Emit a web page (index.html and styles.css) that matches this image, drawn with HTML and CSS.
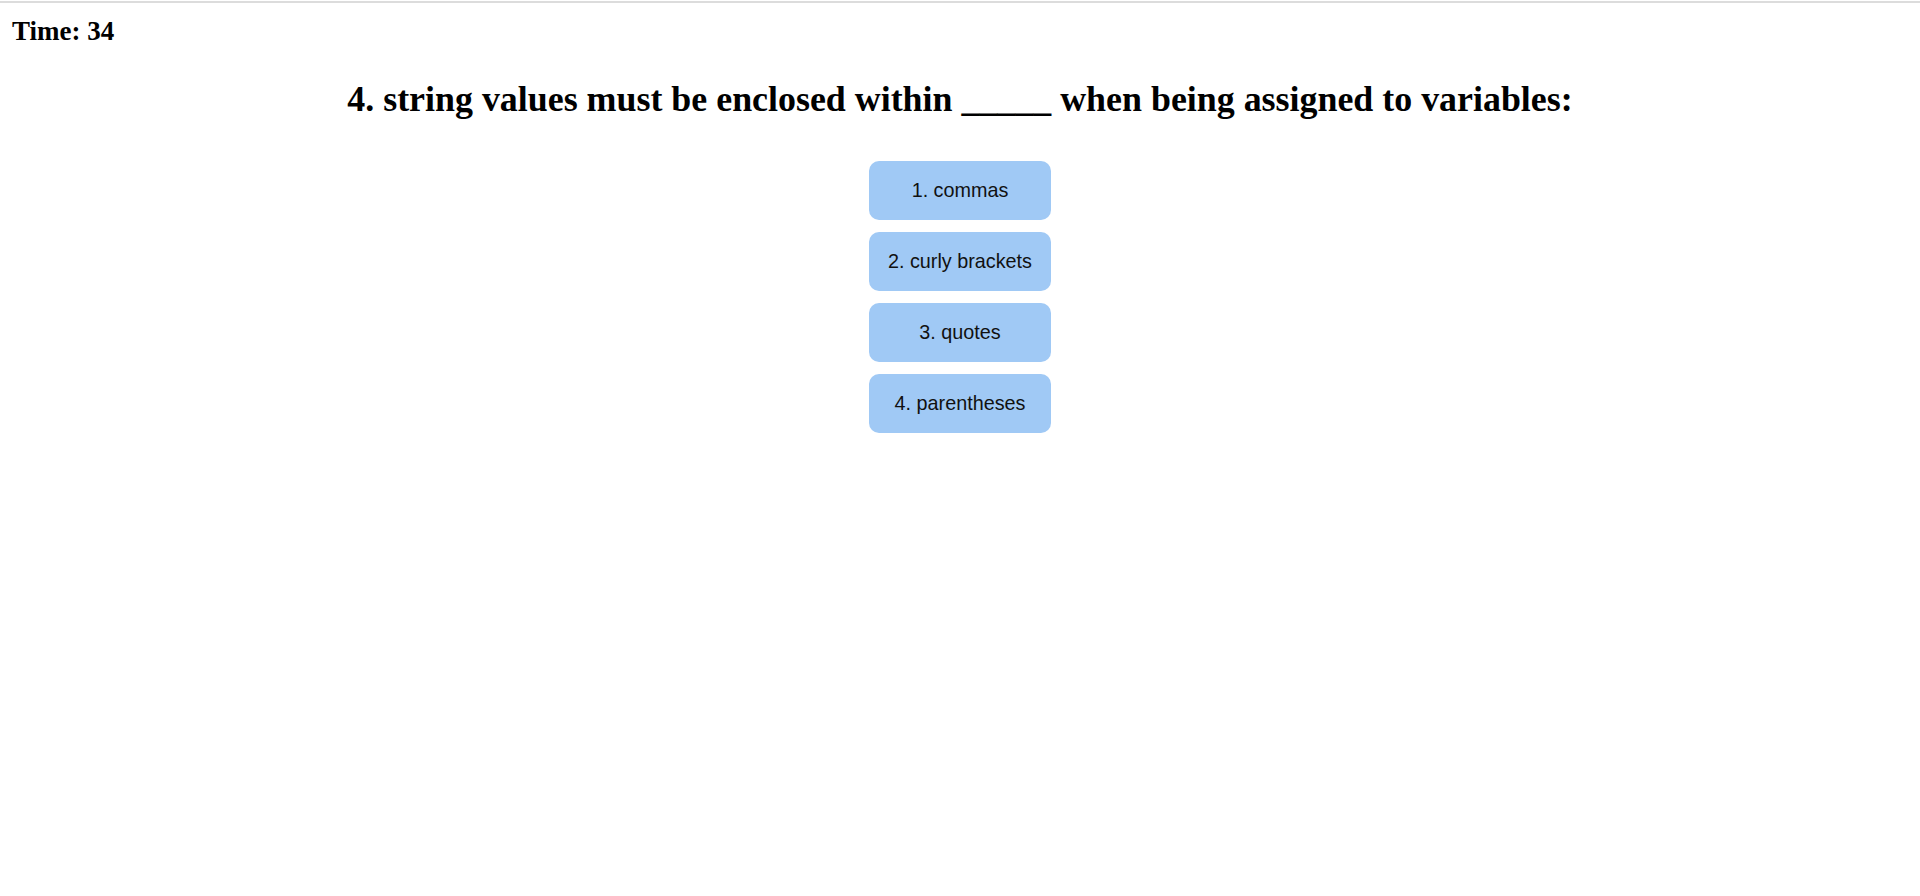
FILE: index.html
```html
<!DOCTYPE html>
<html lang="en">
<head>
<meta charset="utf-8">
<title>Quiz</title>
<link rel="stylesheet" href="styles.css">
</head>
<body>
<div class="topline"></div>
<header class="timer">Time: 34</header>
<main class="quiz">
  <h1 class="question">4. string values must be enclosed within _____ when being assigned to variables:</h1>
  <div class="choices">
    <button class="choice">1. commas</button>
    <button class="choice">2. curly brackets</button>
    <button class="choice">3. quotes</button>
    <button class="choice">4. parentheses</button>
  </div>
</main>
</body>
</html>
```
FILE: styles.css
```css
html, body {
  margin: 0;
  padding: 0;
  background: #ffffff;
}

body {
  font-family: "Liberation Serif", "Times New Roman", serif;
  color: #000;
}

.topline {
  margin-top: 1px;
  height: 0;
  border-top: 2px solid #dcdcdc;
}

.timer {
  margin: 13px 0 0 12px;
  font-size: 27px;
  line-height: 30px;
  font-weight: bold;
}

.quiz {
  display: flex;
  flex-direction: column;
  align-items: center;
}

.question {
  margin: 32.8px 0 0 0;
  font-size: 35.9px;
  line-height: 40px;
  font-weight: bold;
  text-align: center;
}

.choices {
  margin-top: 42.2px;
  display: flex;
  flex-direction: column;
  gap: 12px;
  width: 182px;
}

.choice {
  display: block;
  width: 100%;
  border: none;
  border-radius: 10px;
  background: #a0c9f5;
  color: #111;
  font-family: "Liberation Sans", Arial, sans-serif;
  font-size: 19.8px;
  line-height: 23px;
  padding: 18px 0;
  text-align: center;
  cursor: pointer;
}
```
